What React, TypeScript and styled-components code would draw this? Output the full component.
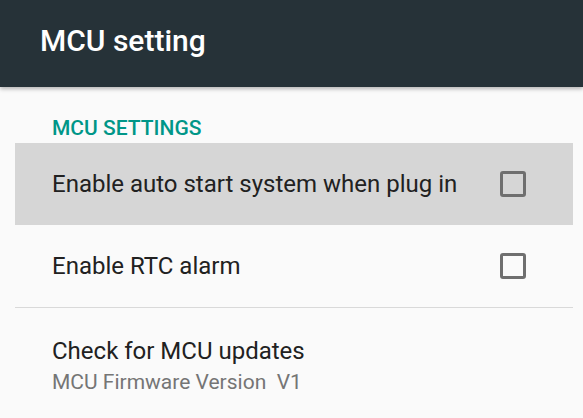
import React, { useState } from "react";
import styled, { createGlobalStyle } from "styled-components";

const GlobalStyle = createGlobalStyle`
  html, body {
    margin: 0;
    padding: 0;
    background: #fafafa;
    font-family: Roboto, "Noto Sans", "Liberation Sans", sans-serif;
  }
`;

const Screen = styled.div`
  width: 583px;
  height: 418px;
  overflow: hidden;
  background: #fafafa;
`;

const Toolbar = styled.header`
  position: relative;
  z-index: 1;
  display: flex;
  align-items: center;
  height: 87px;
  padding: 0 0 6px 40px;
  box-sizing: border-box;
  background: #263238;
  box-shadow: 0 2px 4px rgba(0, 0, 0, 0.28);
  color: #ffffff;
  font-size: 30px;
  font-weight: 500;
`;

const List = styled.div`
  padding: 29px 10px 0 15px;
`;

const Category = styled.div`
  height: 24px;
  line-height: 24px;
  margin-bottom: 3px;
  padding-left: 37px;
  color: #009688;
  font-size: 21px;
  font-weight: 500;
`;

const Row = styled.div<{ $pressed?: boolean; $tall?: boolean }>`
  display: flex;
  align-items: ${(p) => (p.$tall ? "flex-start" : "center")};
  justify-content: space-between;
  height: ${(p) => (p.$tall ? "auto" : "82px")};
  padding: ${(p) => (p.$tall ? "29px 47px 0 37px" : "0 47px 0 37px")};
  box-sizing: border-box;
  background: ${(p) => (p.$pressed ? "#d6d6d6" : "transparent")};
  cursor: pointer;
`;

const Divider = styled.div<{ $faint?: boolean }>`
  height: 1px;
  background: ${(p) => (p.$faint ? "#e0e0e0" : "#d9d9d9")};
`;

const Texts = styled.div`
  display: flex;
  flex-direction: column;
`;

const Title = styled.div`
  color: #212121;
  font-size: 24px;
  line-height: 28px;
`;

const Summary = styled.div`
  margin-top: 5px;
  color: #757575;
  font-size: 21px;
  line-height: 24px;
  white-space: pre;
`;

const Box = styled.span<{ $checked: boolean }>`
  width: 26px;
  height: 26px;
  box-sizing: border-box;
  border: 3px solid #6f6f6f;
  border-radius: 3px;
  background: ${(p) => (p.$checked ? "#009688" : "transparent")};
  border-color: ${(p) => (p.$checked ? "#009688" : "#6f6f6f")};
`;

const App = () => {
  const [autoStart, setAutoStart] = useState(false);
  const [rtc, setRtc] = useState(false);

  return (
    <Screen>
      <GlobalStyle />
      <Toolbar>MCU setting</Toolbar>
      <List>
        <Category>MCU SETTINGS</Category>
        <Row $pressed onClick={() => setAutoStart(!autoStart)}>
          <Title>Enable auto start system when plug in</Title>
          <Box $checked={autoStart} />
        </Row>
        <Row onClick={() => setRtc(!rtc)}>
          <Title>Enable RTC alarm</Title>
          <Box $checked={rtc} />
        </Row>
        <Divider />
        <Row $tall>
          <Texts>
            <Title>Check for MCU updates</Title>
            <Summary>MCU Firmware Version  V1</Summary>
          </Texts>
        </Row>
      </List>
    </Screen>
  );
};

export default App;
